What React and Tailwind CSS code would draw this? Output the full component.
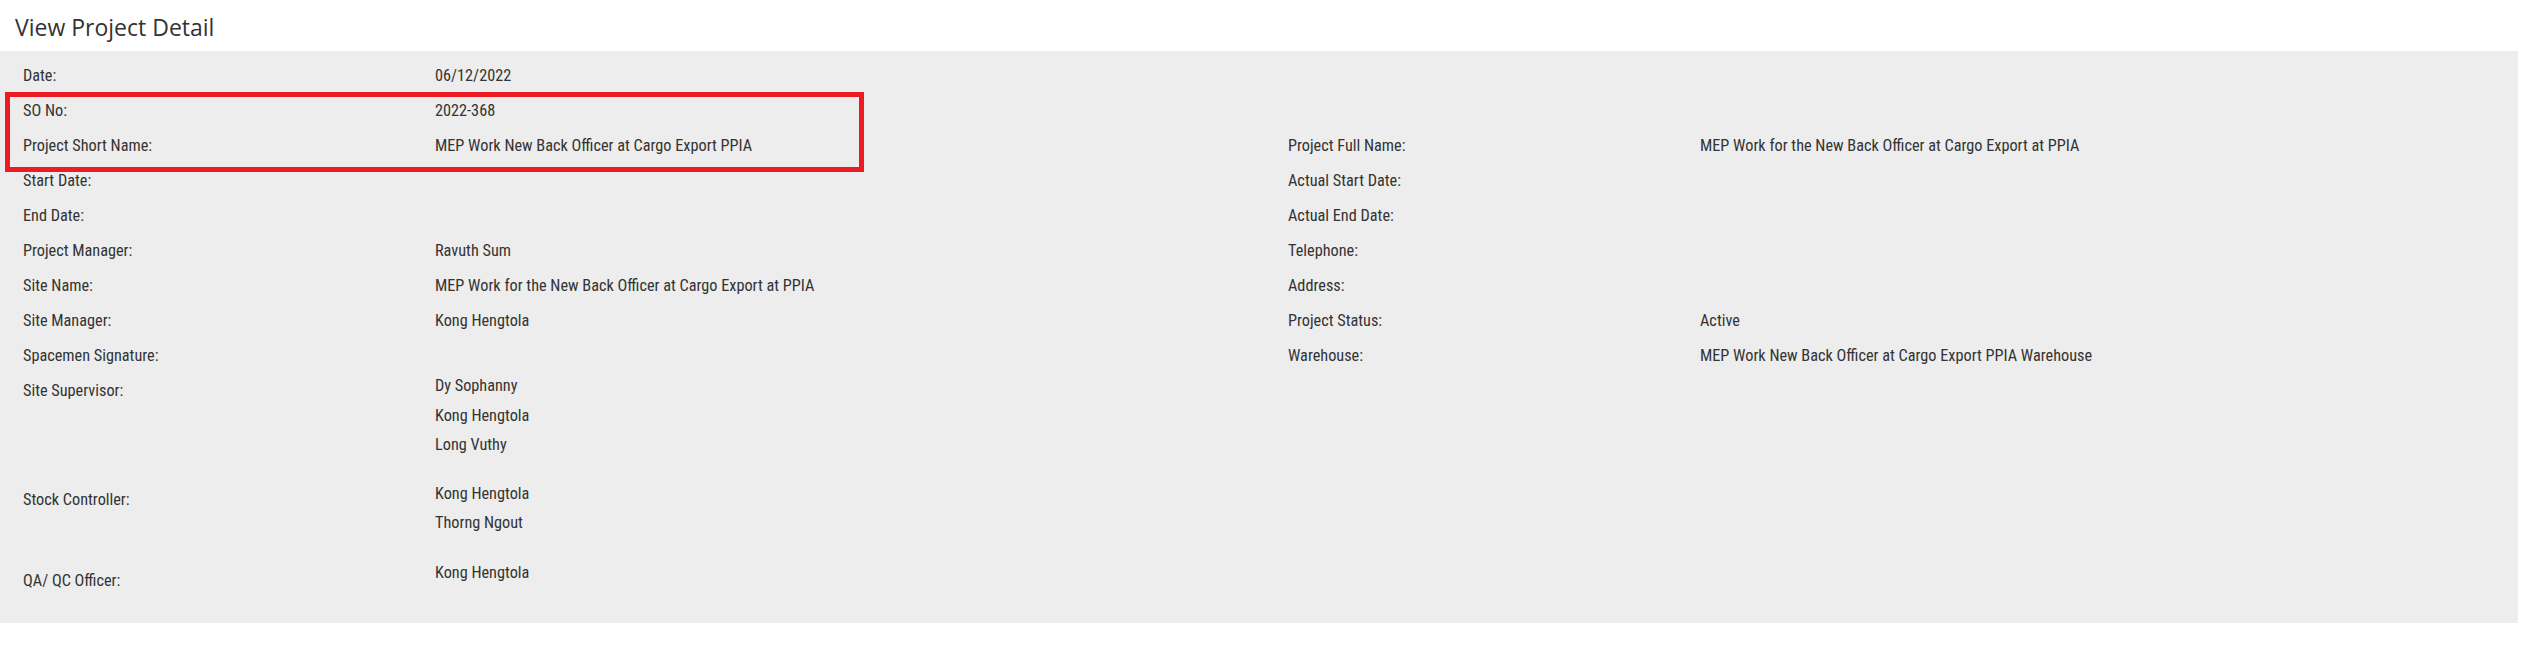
const rows = [
  { label: 'Date:', value: ['06/12/2022'] },
  { label: 'SO No:', value: ['2022-368'] },
  {
    label: 'Project Short Name:',
    value: ['MEP Work New Back Officer at Cargo Export PPIA'],
    label2: 'Project Full Name:',
    value2: 'MEP Work for the New Back Officer at Cargo Export at PPIA',
  },
  { label: 'Start Date:', value: [], label2: 'Actual Start Date:', value2: '' },
  { label: 'End Date:', value: [], label2: 'Actual End Date:', value2: '' },
  { label: 'Project Manager:', value: ['Ravuth Sum'], label2: 'Telephone:', value2: '' },
  {
    label: 'Site Name:',
    value: ['MEP Work for the New Back Officer at Cargo Export at PPIA'],
    label2: 'Address:',
    value2: '',
  },
  { label: 'Site Manager:', value: ['Kong Hengtola'], label2: 'Project Status:', value2: 'Active' },
  {
    label: 'Spacemen Signature:',
    value: [],
    label2: 'Warehouse:',
    value2: 'MEP Work New Back Officer at Cargo Export PPIA Warehouse',
  },
];

const lists = [
  {
    label: 'Site Supervisor:',
    names: ['Dy Sophanny', 'Kong Hengtola', 'Long Vuthy'],
    pad: 'pb-[20px]',
    item: 'leading-[25px] mb-[4.5px]',
  },
  {
    label: 'Stock Controller:',
    names: ['Kong Hengtola', 'Thorng Ngout'],
    pad: 'pb-[22px]',
    item: 'leading-[23px] mb-[6.5px]',
  },
  {
    label: 'QA/ QC Officer:',
    names: ['Kong Hengtola'],
    pad: 'pb-[22px]',
    item: 'leading-[20px] mb-[9.5px]',
  },
];

export default function App() {
  return (
    <div className="relative min-h-[648px] bg-white text-[#333]">
      <div className="h-[51px] pl-[15px] pt-[12px]">
        <h1 className="text-[23px] leading-[30px] font-normal text-[#333] font-['Open_Sans',sans-serif]">
          View Project Detail
        </h1>
      </div>

      <div className="w-[2518px] bg-[#ededed] pt-[7px] pb-[9px] font-['Roboto',sans-serif] font-stretch-condensed text-[16.25px]">
        <div className="grid grid-cols-[435px_853px_412px_1fr]">
          {rows.map((r) => (
            <div key={r.label} className="contents">
              <div className="pl-[23px] leading-[35px]">{r.label}</div>
              <div className="leading-[35px]">{r.value[0] || ''}</div>
              <div className="leading-[35px]">{r.label2 || ''}</div>
              <div className="leading-[35px]">{r.value2 || ''}</div>
            </div>
          ))}

          {lists.map((l) => (
            <div key={l.label} className="contents">
              <div className="pl-[23px] leading-[35px]">{l.label}</div>
              <div className={`flex flex-col ${l.pad}`}>
                {l.names.map((n, i) => (
                  <div key={i} className={l.item}>
                    {n}
                  </div>
                ))}
              </div>
              <div />
              <div />
            </div>
          ))}
        </div>
      </div>

      {/* highlight box */}
      <div className="absolute left-[5px] top-[92px] w-[859px] h-[80px] border-[5px] border-[#ed1c24]" />
    </div>
  );
}
